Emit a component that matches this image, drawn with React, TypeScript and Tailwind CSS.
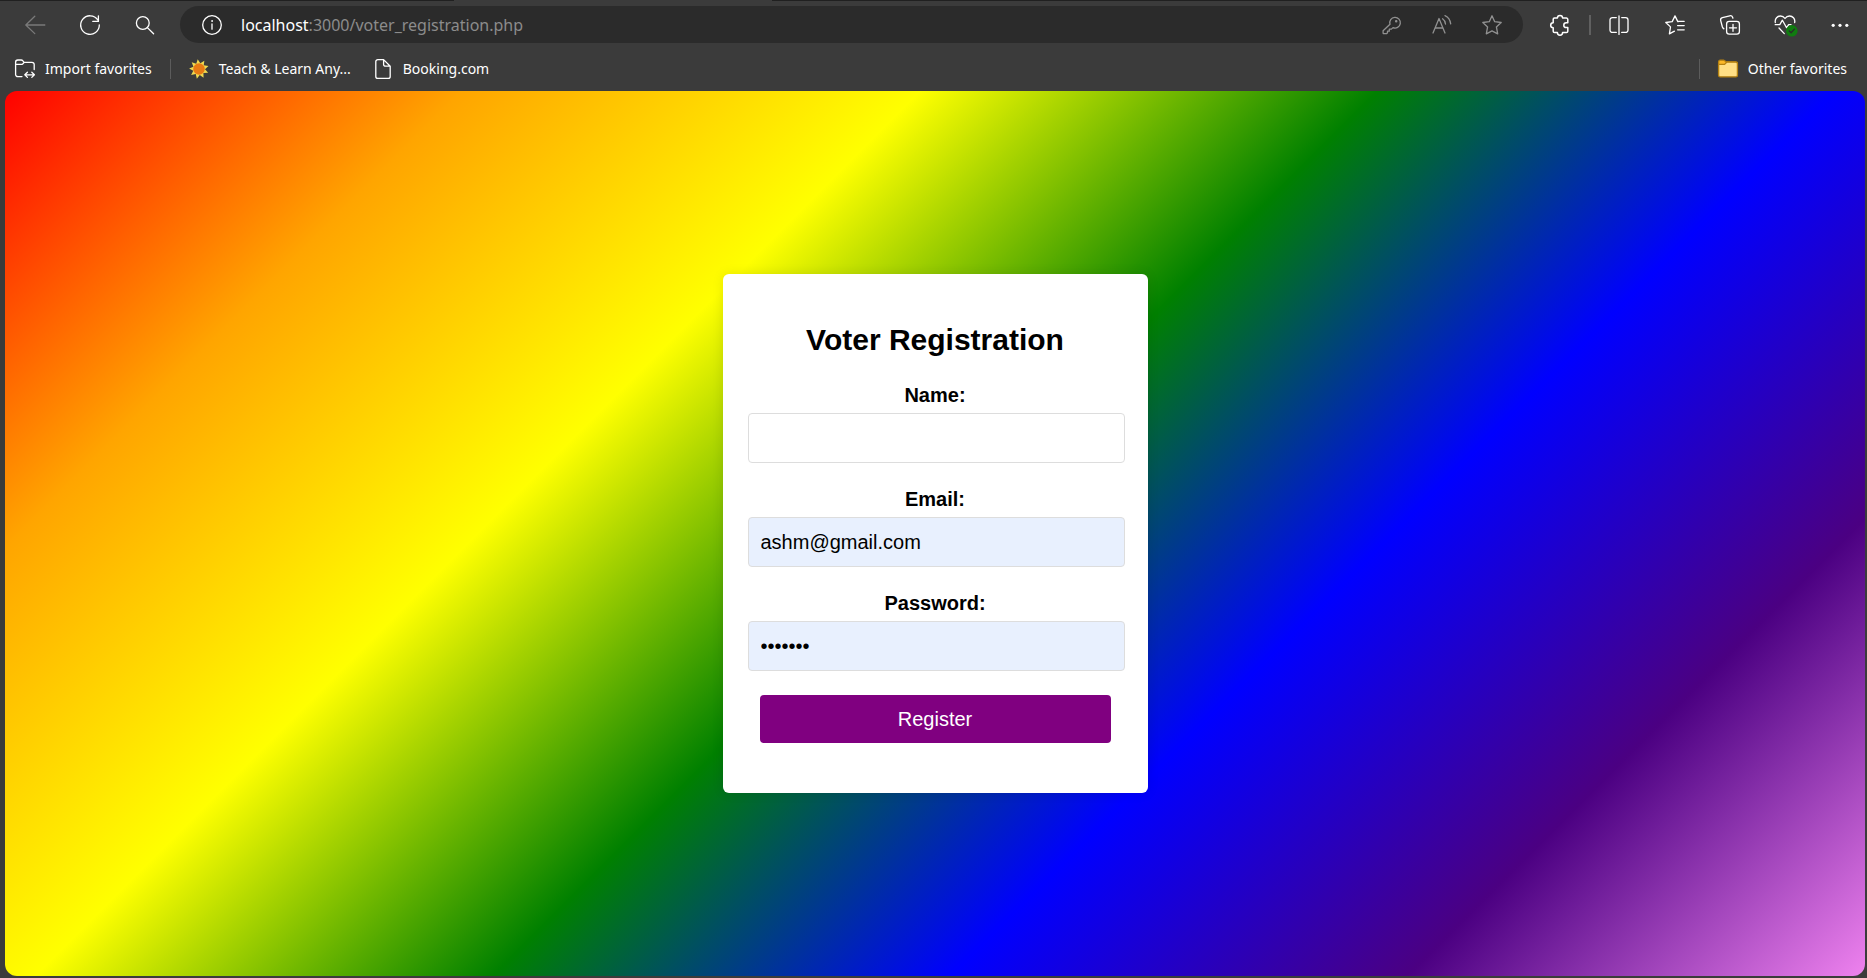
import React, { useState } from "react";

type IconProps = { className?: string; children: React.ReactNode };

function Icon({ className = "", children }: IconProps) {
  return (
    <svg
      viewBox="0 0 20 20"
      className={`size-5 shrink-0 overflow-visible ${className}`}
      fill="none"
      stroke="currentColor"
      strokeWidth="1.3"
      strokeLinecap="round"
      strokeLinejoin="round"
      aria-hidden="true"
    >
      {children}
    </svg>
  );
}

function IconButton({ label, className = "", children }: IconProps & { label: string }) {
  return (
    <button type="button" aria-label={label} className={`shrink-0 ${className}`}>
      <Icon>{children}</Icon>
    </button>
  );
}

const STAR =
  "M10 .8l2.7 5.9 6.5.8-4.8 4.4 1.3 6.9L10 15.9l-5.7 2.9 1.3-6.9L.8 7.5l6.5-.8z";

// Nine sun rays, alternating between the outer and inner radius.
const SUN_RAYS = Array.from({ length: 18 }, (_, i) => {
  const radius = i % 2 === 0 ? 9.9 : 6;
  const angle = (i * Math.PI) / 9 - 1.7;
  return `${10 + radius * Math.cos(angle)},${10 + radius * Math.sin(angle)}`;
}).join(" ");

function AddressBar() {
  return (
    <div className="flex h-[37px] min-w-0 flex-1 items-center rounded-full bg-[#2b2b2b] pr-[21px] pl-[22px]">
      <IconButton label="View site information">
        <circle cx="10" cy="10" r="9.3" />
        <path d="M10 9v5.2" />
        <circle cx="10" cy="6" r=".5" fill="currentColor" strokeWidth=".8" />
      </IconButton>
      <p className="ml-[19px] min-w-0 flex-1 truncate text-base text-[#8c8c8c]">
        <span className="text-white">localhost</span>:3000/voter_registration.php
      </p>
      <div className="flex items-center gap-[30px] text-[#919191]">
        <IconButton label="Saved passwords">
          <path d="M8 9.3a5.3 5.3 0 1 1 3 3.3l-1.6 1.5H7.3v2.1H5.5v1.6l-1 .9H1.6l-.5-.5v-2.4z" />
          <circle cx="14.2" cy="6.2" r=".6" fill="currentColor" />
        </IconButton>
        <IconButton label="Read aloud">
          <path d="M1 18L7 3.5 13 18M3.1 13h7.8M10.6 3.8c1.7 1.2 2.7 3 2.9 5.2M13 .6c3.4 1.6 5.3 4.6 5.7 8.3" />
        </IconButton>
        <IconButton label="Add to favorites">
          <path d={STAR} />
        </IconButton>
      </div>
    </div>
  );
}

function Toolbar() {
  return (
    <div className="flex h-[47px] items-center pr-[17px] pl-[25px]">
      <div className="mr-[25px] flex items-center gap-[35px]">
        <IconButton label="Back" className="text-[#7a7a7a]">
          <path d="M9.8 1.2L.8 10l9 8.6M1 10h18.8" />
        </IconButton>
        <IconButton label="Refresh">
          <path d="M19.3 9.8A9.3 9.3 0 1 1 17.8 5M18.4.8v5.6h-5.6" />
        </IconButton>
        <IconButton label="Search">
          <circle cx="7.8" cy="8" r="6.4" />
          <path d="M12.4 12.6l6.2 6.2" />
        </IconButton>
      </div>
      <AddressBar />
      <IconButton label="Extensions" className="ml-[27px]">
        <path
          strokeWidth="1.5"
          d="M4.400 3H7.400a2.600 2.600 0 0 1 5.200 0h3.800a1.400 1.400 0 0 1 1.400 1.400v3.400h-1.600a2.400 2.400 0 0 0 0 4.800h1.600v3.600a1.400 1.400 0 0 1-1.400 1.400h-3.800a2.600 2.600 0 0 1-5.200 0H4.600a1.400 1.400 0 0 1-1.400-1.400v-3.500a2.500 2.500 0 0 1 0-5V4.200A1.200 1.200 0 0 1 4.400 3z"
        />
      </IconButton>
      <span className="mr-[18px] ml-[19px] h-5 w-0.5 shrink-0 bg-[#606060]" />
      <IconButton label="Split screen" className="mr-9">
        <path d="M7.3 2.6H3.4A2.4 2.4 0 0 0 1 5v10a2.4 2.4 0 0 0 2.4 2.4h3.9M12.7 2.6h3.9A2.4 2.4 0 0 1 19 5v10a2.4 2.4 0 0 1-2.4 2.4h-3.9M10 .8v18.6" />
      </IconButton>
      <div className="flex items-center gap-[35px]">
        <IconButton label="Favorites">
          <path d="M13.4 6.6h-.6L10 .9 7.2 6.6l-6.4.9 4.7 4.4-1.1 6.9 5-2.6M12.6 6.3h6.6M12.6 10.6h6.6M12.6 14.8h6.6" />
        </IconButton>
        <IconButton label="Collections">
          <rect x="6.6" y="6.4" width="12.8" height="12.8" rx="2.6" />
          <path d="M13 9.3v7M9.5 12.8h7M3.9 13.8A3 3 0 0 1 2.4 12L.7 5.6a2.4 2.4 0 0 1 1.7-2.9L9.8.8a2.4 2.4 0 0 1 2.8 1.5l.3.9" />
        </IconButton>
        <IconButton label="Browser essentials">
          <path d="M.3 7.500C-.4 3.500 2.600 1 5.400 1 7.500 1 9 2 10 3.500 11 2 12.500 1 14.600 1 17.500 1 20.400 3.500 19.700 7.500M.2 9.700h4.600L7.400 5.200l4.200 7.600 2-3.100h2.400M4 13l5.300 5.600" />
          <circle cx="16.800" cy="15.800" r="5.800" fill="#107c10" stroke="none" />
          <path d="M14.300 16l1.800 1.800 3.300-3.700" stroke="#2b2b2b" />
        </IconButton>
        <IconButton label="Settings and more">
          <g fill="currentColor" stroke="none">
            <circle cx="3.200" cy="10.300" r="1.600" />
            <circle cx="10" cy="10.300" r="1.600" />
            <circle cx="16.800" cy="10.300" r="1.600" />
          </g>
        </IconButton>
      </div>
    </div>
  );
}

function FavoritesBar() {
  return (
    <nav aria-label="Favorites bar" className="flex h-[43px] items-center pr-5 pb-0.5 pl-[15px] text-sm">
      <button type="button" className="flex items-center gap-2.5">
        <Icon>
          <path d="M7 17.600H2.800A2.200 2.200 0 0 1 .6 15.400V3.200A2.200 2.200 0 0 1 2.800 1h3.400c.7 0 1.300.3 1.700.8l1.200 1.500h7.800a2.300 2.300 0 0 1 2.300 2.300v5M.6 5.400h5.600c.7 0 1.200-.2 1.700-.7l1.300-1.400M10 15.800h9M12.400 13.200l-2.600 2.600 2.600 2.600M16.800 13.200l2.600 2.600-2.600 2.600" />
        </Icon>
        Import favorites
      </button>
      <span className="mx-[18px] h-5 w-px bg-[#5c5c5c]" />
      <a href="#teach" className="flex items-center gap-2.5">
        <Icon>
          <polygon stroke="none" fill="#efd94f" points={SUN_RAYS} />
          <circle cx="10" cy="10" r="5.800" fill="#e87a14" stroke="none" />
        </Icon>
        Teach &amp; Learn Any...
      </a>
      <a href="#booking" className="ml-[22px] flex items-center gap-2.5">
        <Icon>
          <path d="M10.600.6H4.800a2 2 0 0 0-2 2v14.800a2 2 0 0 0 2 2h10.400a2 2 0 0 0 2-2V7.200zM10.600.6v4.800a1.800 1.800 0 0 0 1.800 1.800h4.800" />
        </Icon>
        Booking.com
      </a>
      <span className="mr-[18px] ml-auto h-5 w-px bg-[#5c5c5c]" />
      <button type="button" className="flex items-center gap-2.5">
        <Icon>
          <path
            fill="#fcb827"
            stroke="#b58212"
            d="M.6 16.600V2.800A1.600 1.600 0 0 1 2.200 1.200h3.600l2.400 1.600h9.600a1.600 1.600 0 0 1 1.600 1.600v12.200z"
          />
          <path
            fill="#ffdf85"
            stroke="#b58212"
            d="M.6 5.400h6l2-2.200h9.200a1.600 1.600 0 0 1 1.600 1.600v11.400a1.600 1.600 0 0 1-1.600 1.600H2.200a1.600 1.600 0 0 1-1.600-1.600z"
          />
        </Icon>
        Other favorites
      </button>
    </nav>
  );
}

type FieldProps = {
  id: string;
  label: string;
  type: string;
  value: string;
  onChange: (value: string) => void;
  className?: string;
};

function Field({ id, label, type, value, onChange, className = "bg-white" }: FieldProps) {
  return (
    <div className="mb-6">
      <label htmlFor={id} className="block pb-1.5 text-center text-xl/6 font-bold">
        {label}
      </label>
      <input
        id={id}
        type={type}
        value={value}
        autoComplete="off"
        onChange={(e) => onChange(e.target.value)}
        className={`block h-[50px] w-[377px] rounded border border-[#ddd] px-3 text-xl outline-none ${className}`}
      />
    </div>
  );
}

function RegistrationForm() {
  const [name, setName] = useState("");
  const [email, setEmail] = useState("ashm@gmail.com");
  const [password, setPassword] = useState("ashm123");

  return (
    <form
      onSubmit={(e) => e.preventDefault()}
      className="w-[425px] rounded-md bg-white px-[25px] py-[50px] text-black shadow-[0_0_12px_rgba(0,0,0,0.1)]"
    >
      <h1 className="mb-[27px] text-center text-3xl/8 font-bold">Voter Registration</h1>
      <Field id="name" label="Name:" type="text" value={name} onChange={setName} />
      <Field id="email" label="Email:" type="email" value={email} onChange={setEmail} className="bg-[#e8f0fe]" />
      <Field
        id="password"
        label="Password:"
        type="password"
        value={password}
        onChange={setPassword}
        className="bg-[#e8f0fe]"
      />
      <div className="px-3">
        <button type="submit" className="block h-12 w-full rounded bg-[#800080] text-xl text-white">
          Register
        </button>
      </div>
    </form>
  );
}

export default function App() {
  return (
    <div className="flex min-h-screen flex-col bg-[#3b3b3b] font-['Noto_Sans',sans-serif] text-white">
      <header>
        <div className="flex h-px">
          <span className="w-[454px] bg-[#202020]" />
          <span className="w-[318px]" />
          <span className="flex-1 bg-[#202020]" />
        </div>
        <Toolbar />
        <FavoritesBar />
      </header>
      <main className="mr-0.5 mb-0.5 ml-[5px] flex flex-1 items-center justify-center rounded-xl bg-[linear-gradient(135deg,red,orange,yellow,green,blue,indigo,violet)] font-['Liberation_Sans',Arial,sans-serif]">
        <RegistrationForm />
      </main>
    </div>
  );
}
